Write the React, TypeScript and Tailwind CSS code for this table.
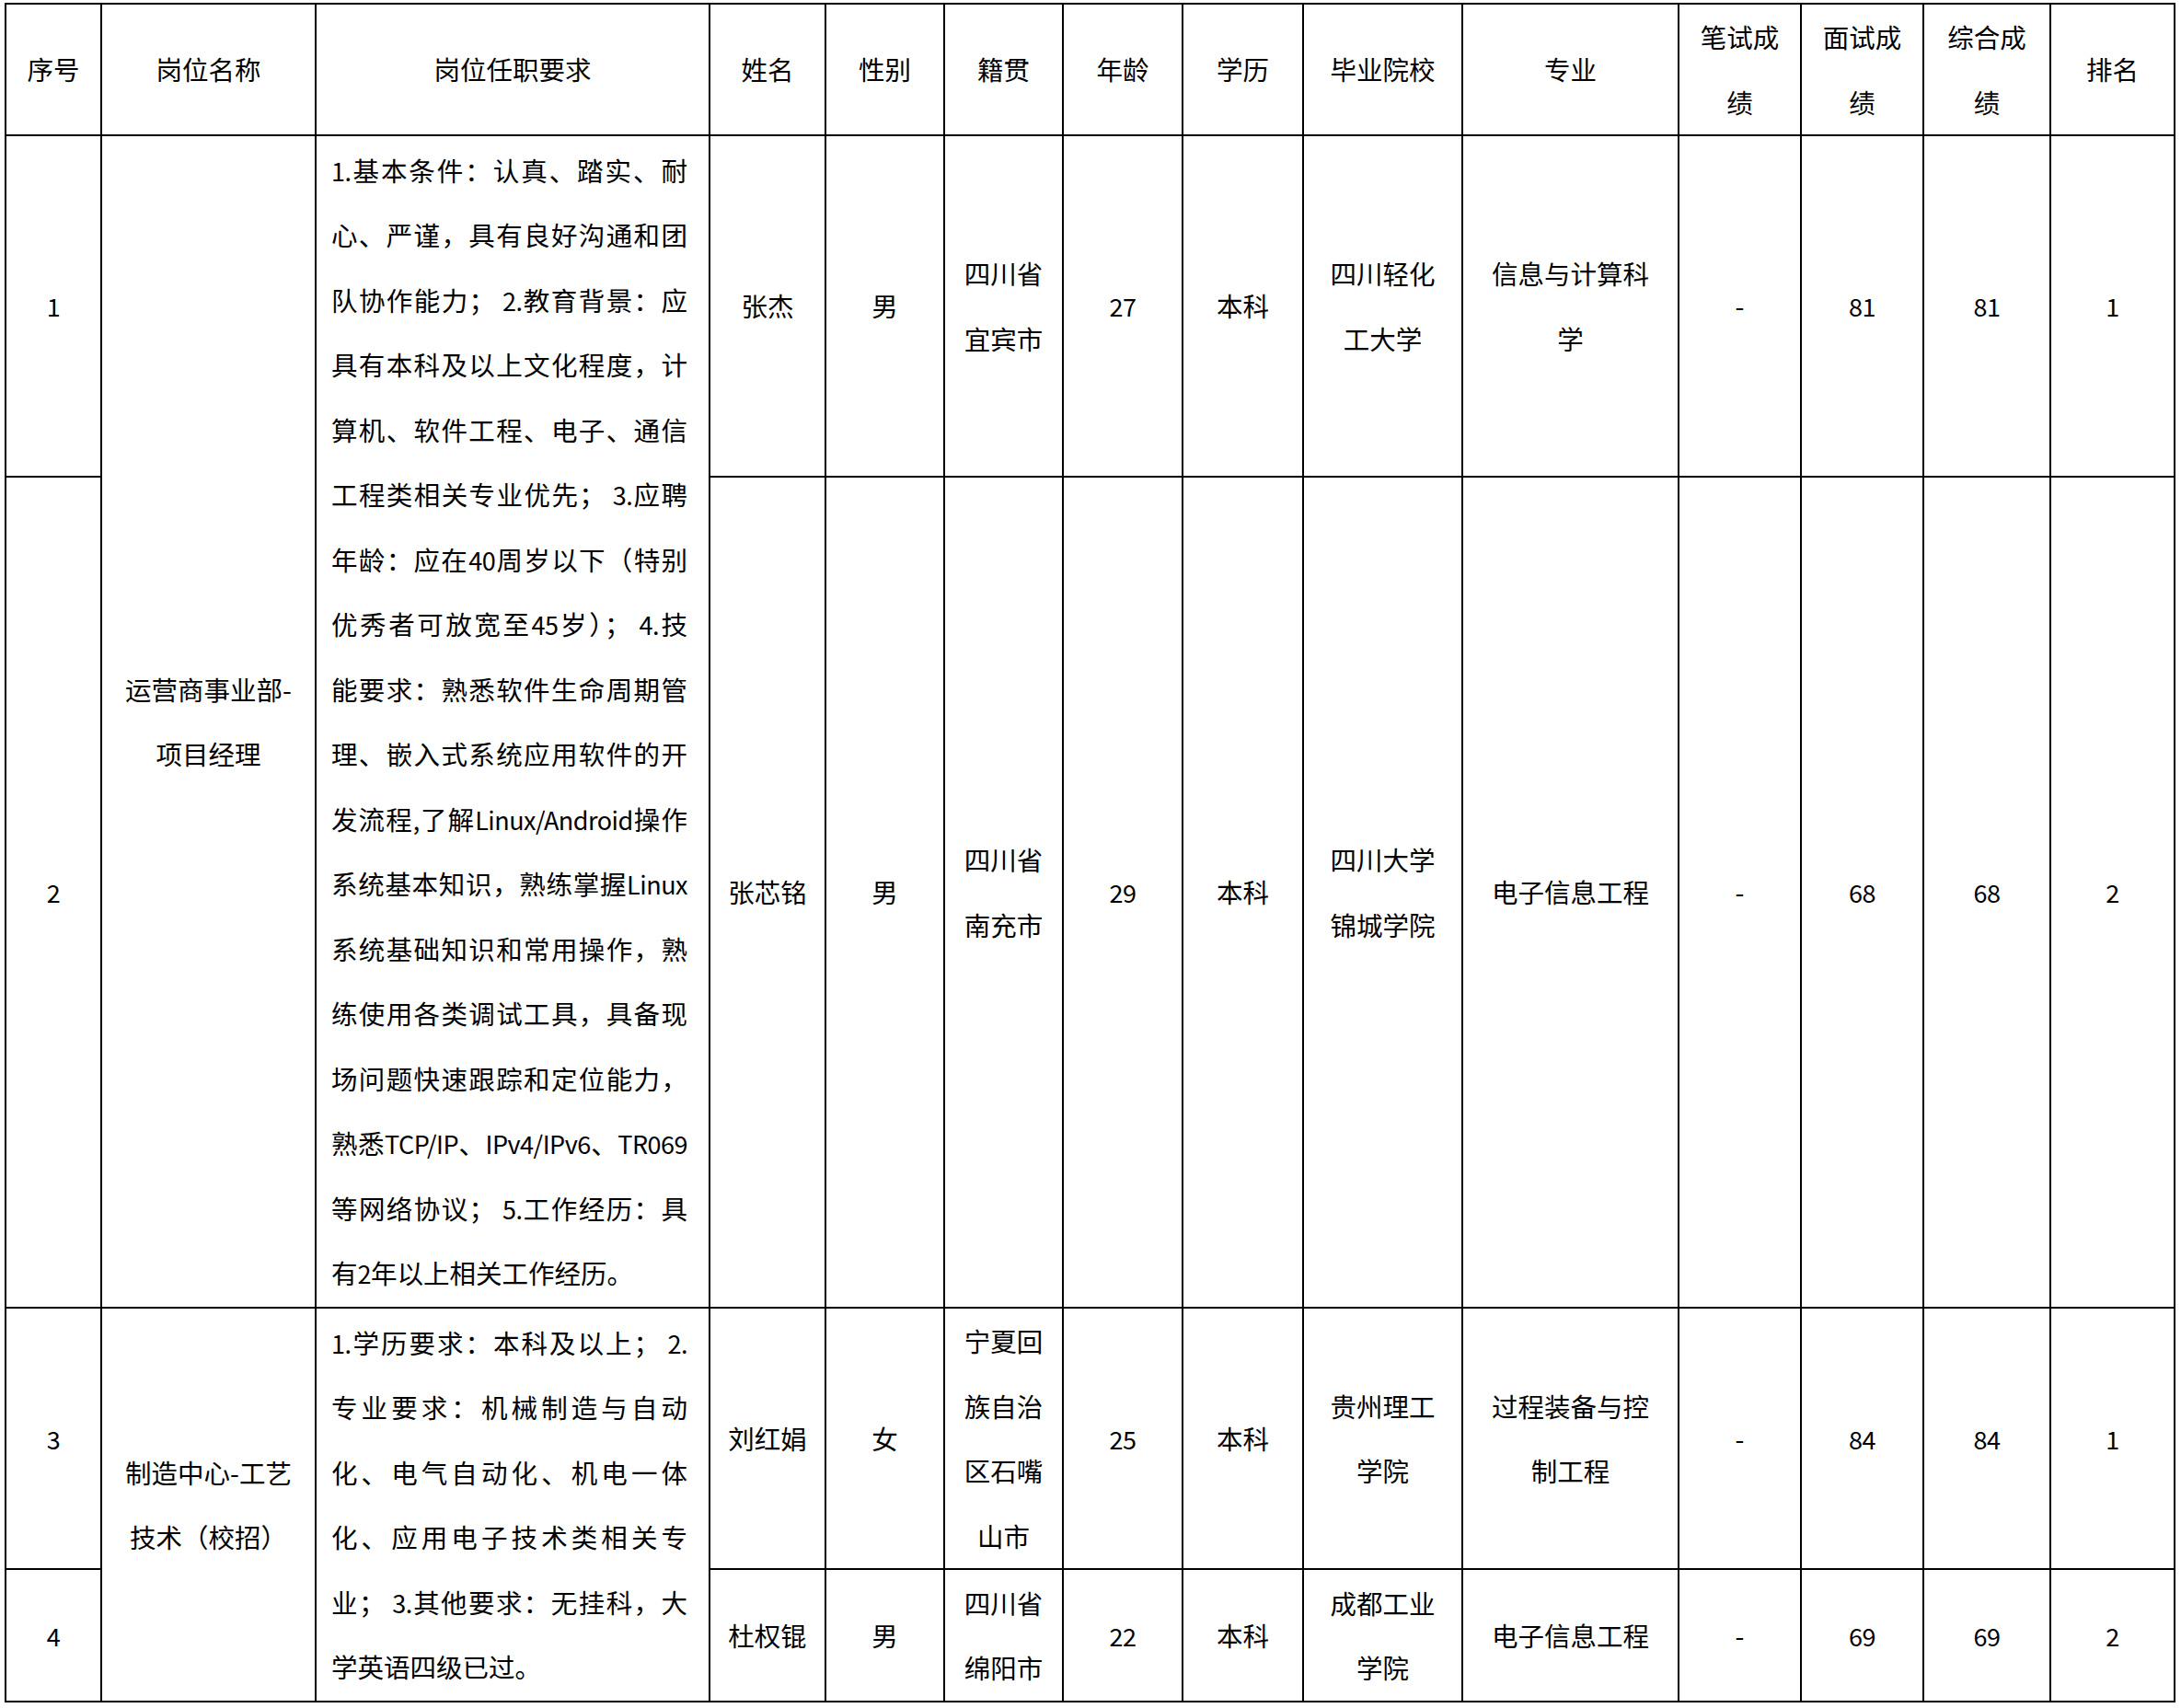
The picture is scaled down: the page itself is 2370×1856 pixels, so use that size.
import React from "react"

type Row = {
  no: string
  name: string
  sex: string
  origin: string[]
  age: string
  edu: string
  school: string[]
  major: string[]
  written: string
  interview: string
  total: string
  rank: string
}

const cols = [104, 233, 428, 126, 129, 129, 130, 131, 173, 235, 133, 133, 138, 135]

const req1 = [
  "1.基本条件：认真、踏实、耐",
  "心、严谨，具有良好沟通和团",
  "队协作能力； 2.教育背景：应",
  "具有本科及以上文化程度，计",
  "算机、软件工程、电子、通信",
  "工程类相关专业优先； 3.应聘",
  "年龄：应在40周岁以下（特别",
  "优秀者可放宽至45岁）； 4.技",
  "能要求：熟悉软件生命周期管",
  "理、嵌入式系统应用软件的开",
  "发流程,了解Linux/Android操作",
  "系统基本知识，熟练掌握Linux",
  "系统基础知识和常用操作，熟",
  "练使用各类调试工具，具备现",
  "场问题快速跟踪和定位能力，",
  "熟悉TCP/IP、IPv4/IPv6、TR069",
  "等网络协议； 5.工作经历：具",
  "有2年以上相关工作经历。",
]

const req2 = [
  "1.学历要求：本科及以上； 2.",
  "专业要求：机械制造与自动",
  "化、电气自动化、机电一体",
  "化、应用电子技术类相关专",
  "业； 3.其他要求：无挂科，大",
  "学英语四级已过。",
]

const rows: Row[] = [
  { no: "1", name: "张杰", sex: "男", origin: ["四川省", "宜宾市"], age: "27", edu: "本科", school: ["四川轻化", "工大学"], major: ["信息与计算科", "学"], written: "-", interview: "81", total: "81", rank: "1" },
  { no: "2", name: "张芯铭", sex: "男", origin: ["四川省", "南充市"], age: "29", edu: "本科", school: ["四川大学", "锦城学院"], major: ["电子信息工程"], written: "-", interview: "68", total: "68", rank: "2" },
  { no: "3", name: "刘红娟", sex: "女", origin: ["宁夏回", "族自治", "区石嘴", "山市"], age: "25", edu: "本科", school: ["贵州理工", "学院"], major: ["过程装备与控", "制工程"], written: "-", interview: "84", total: "84", rank: "1" },
  { no: "4", name: "杜权锟", sex: "男", origin: ["四川省", "绵阳市"], age: "22", edu: "本科", school: ["成都工业", "学院"], major: ["电子信息工程"], written: "-", interview: "69", total: "69", rank: "2" },
]

const heights = ["h-[371px]", "h-[903px]", "h-[282px]", "h-[144px]"]

// latin runs are set a touch tighter, like Calibri in the original sheet
function Mixed({ text }: { text: string }) {
  const parts = text.split(/([A-Za-z0-9.,/]+)/)
  return (
    <>
      {parts.map((p, i) =>
        /^[A-Za-z0-9.,/]+$/.test(p) ? (
          <span key={i} className="text-[27px] leading-none tracking-[-0.5px]">
            {p}
          </span>
        ) : (
          <React.Fragment key={i}>{p}</React.Fragment>
        )
      )}
    </>
  )
}

function Lines({ lines }: { lines: string[] }) {
  return (
    <>
      {lines.map((l, i) => (
        <div key={i}>
          <Mixed text={l} />
        </div>
      ))}
    </>
  )
}

function Cell({ children, rowSpan }: { children: React.ReactNode; rowSpan?: number }) {
  return (
    <td rowSpan={rowSpan} className="border-2 border-black px-1 py-0 text-center align-middle">
      {children}
    </td>
  )
}

function Requirements({ lines }: { lines: string[] }) {
  return (
    <td rowSpan={2} className="border-2 border-black pl-[16px] pr-[23px] py-0 align-middle">
      {lines.map((l, i) => (
        <div
          key={i}
          className={i === lines.length - 1 ? "text-left" : "text-justify [text-align-last:justify]"}
        >
          <Mixed text={l} />
        </div>
      ))}
    </td>
  )
}

export default function App() {
  const headers: string[][] = [
    ["序号"],
    ["岗位名称"],
    ["岗位任职要求"],
    ["姓名"],
    ["性别"],
    ["籍贯"],
    ["年龄"],
    ["学历"],
    ["毕业院校"],
    ["专业"],
    ["笔试成", "绩"],
    ["面试成", "绩"],
    ["综合成", "绩"],
    ["排名"],
  ]

  return (
    <div className="w-[2370px] h-[1856px] bg-white pl-[5px] pt-[3px] text-black font-['Noto_Sans_CJK_SC',sans-serif] text-[28.5px] leading-[70.5px]">
      <table className="table-fixed border-collapse border-2 border-black w-[2359px]">
        <colgroup>
          {cols.map((w, i) => (
            <col key={i} style={{ width: w }} />
          ))}
        </colgroup>
        <thead>
          <tr className="h-[143px]">
            {headers.map((h, i) => (
              <th key={i} className="border-2 border-black px-1 py-0 font-normal text-center align-middle">
                <Lines lines={h} />
              </th>
            ))}
          </tr>
        </thead>
        <tbody>
          {rows.map((r, i) => (
            <tr key={r.no} className={heights[i]}>
              <Cell>
                <Mixed text={r.no} />
              </Cell>
              {i === 0 && (
                <Cell rowSpan={2}>
                  <Lines lines={["运营商事业部-", "项目经理"]} />
                </Cell>
              )}
              {i === 0 && <Requirements lines={req1} />}
              {i === 2 && (
                <Cell rowSpan={2}>
                  <Lines lines={["制造中心-工艺", "技术（校招）"]} />
                </Cell>
              )}
              {i === 2 && <Requirements lines={req2} />}
              <Cell>{r.name}</Cell>
              <Cell>{r.sex}</Cell>
              <Cell>
                <Lines lines={r.origin} />
              </Cell>
              <Cell>
                <Mixed text={r.age} />
              </Cell>
              <Cell>{r.edu}</Cell>
              <Cell>
                <Lines lines={r.school} />
              </Cell>
              <Cell>
                <Lines lines={r.major} />
              </Cell>
              <Cell>{r.written}</Cell>
              <Cell>
                <Mixed text={r.interview} />
              </Cell>
              <Cell>
                <Mixed text={r.total} />
              </Cell>
              <Cell>
                <Mixed text={r.rank} />
              </Cell>
            </tr>
          ))}
        </tbody>
      </table>
    </div>
  )
}
